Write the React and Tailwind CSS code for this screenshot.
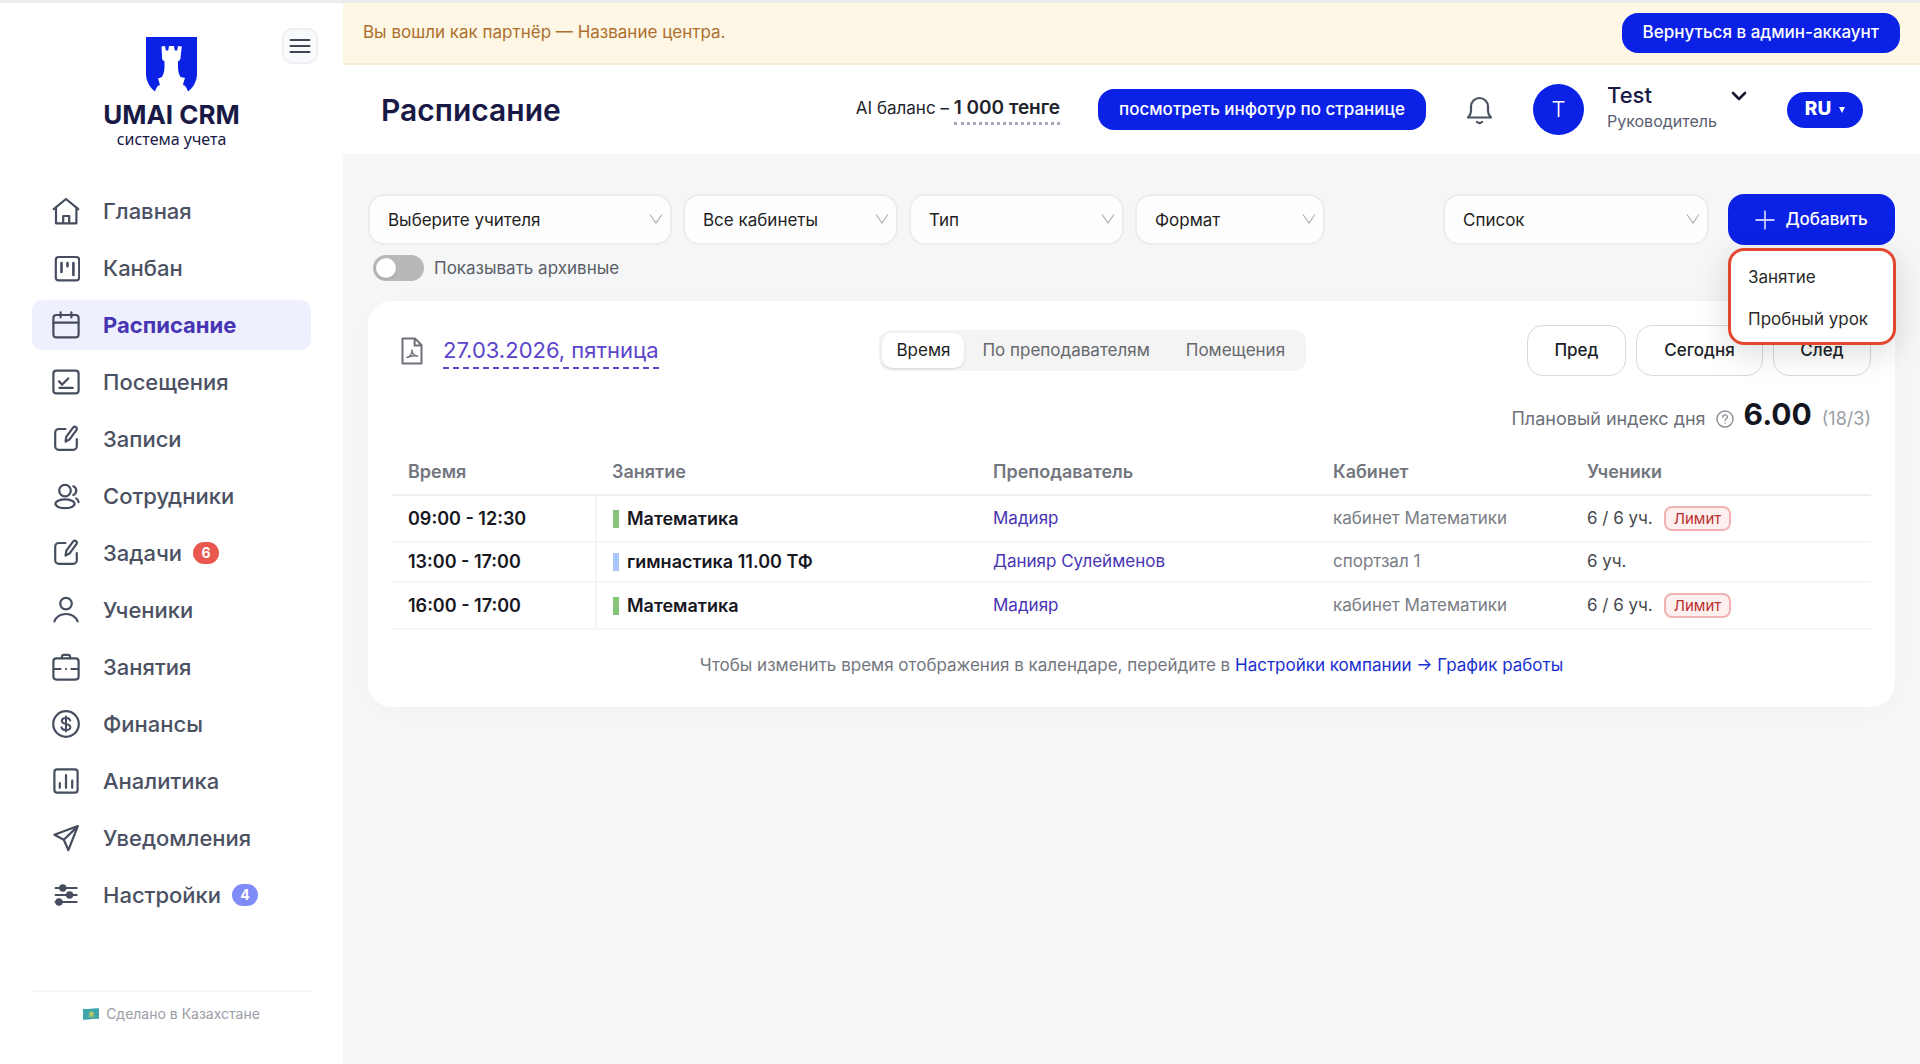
import { useState } from "react";

const NavIcon = ({ children }) => (
  <svg
    viewBox="0 0 28 28"
    fill="none"
    stroke="currentColor"
    strokeWidth="2.2"
    strokeLinecap="round"
    strokeLinejoin="round"
    aria-hidden="true"
    className="h-7 w-7 shrink-0 text-[#454d5e]"
  >
    {children}
  </svg>
);

const HomeIcon = () => (
  <NavIcon>
    <path d="M1.7 12.2 14 2l12.3 10.2M4 10.8V26.3h20.4V10.8" />
    <path d="M11.2 26v-7h6v7" />
  </NavIcon>
);

const KanbanIcon = () => (
  <NavIcon>
    <rect x="3.8" y="3" width="23.4" height="23.4" rx="3" />
    <path d="M9.5 9v9M15.5 9v3.2M21.4 9v12" strokeWidth="2.6" />
  </NavIcon>
);

const CalendarIcon = () => (
  <NavIcon>
    <rect x="1.4" y="4" width="25.2" height="22.4" rx="3" />
    <path d="M1.4 11.6h25.2M8.6 1.4v5M19.4 1.4v5" />
  </NavIcon>
);

const VisitsIcon = () => (
  <NavIcon>
    <rect x="1.4" y="2.6" width="25.2" height="22.8" rx="3" />
    <path d="m7 13.4 3.2 3.2 6-6.2M7.4 19.8h13.4" />
  </NavIcon>
);

const EditIcon = () => (
  <NavIcon>
    <path d="M13.400 4H6.800a3.600 3.600 0 0 0-3.600 3.600v13.600a3.600 3.600 0 0 0 3.600 3.600h14.400a3.600 3.600 0 0 0 3.600-3.600V14" />
    <path d="m13.600 16.600.6-4.800 7-9.400a2.100 2.100 0 0 1 3.400 2.400l-6.800 9.400z" />
  </NavIcon>
);

const StaffIcon = () => (
  <NavIcon>
    <circle cx="13" cy="8.600" r="5.800" />
    <ellipse cx="13" cy="21.800" rx="9.600" ry="4.400" />
    <path d="M21.400 4.200c1.800.8 2.800 2.400 2.800 4.400s-1 3.600-2.800 4.400M24.200 16.400c1.400.8 2.200 2 2.400 3.800" />
  </NavIcon>
);

const PupilIcon = () => (
  <NavIcon>
    <circle cx="14" cy="7.6" r="5.8" />
    <path d="M2.4 25.4C4.4 20.600 8.800 18 14 18s9.600 2.600 11.600 7.400" />
  </NavIcon>
);

const BriefcaseIcon = () => (
  <NavIcon>
    <rect x="1.400" y="5.400" width="25.200" height="21.200" rx="3" />
    <path d="M10 5.200V3.600a1.800 1.800 0 0 1 1.800-1.800h4.400A1.800 1.800 0 0 1 18 3.600v1.600M2 16h6.600M14 16h.1M19.400 16H26" />
  </NavIcon>
);

const FinanceIcon = () => (
  <NavIcon>
    <circle cx="14" cy="14" r="12.800" />
    <path
      d="M18.200 10.600c-.4-1.600-2-2.700-4.200-2.700-2.400 0-4.200 1.200-4.200 3 0 4.200 8.600 1.800 8.600 6.200 0 1.800-1.900 3-4.400 3-2.400 0-4.200-1.100-4.600-2.900M14 6.400v15.200"
      strokeWidth="2"
    />
  </NavIcon>
);

const AnalyticsIcon = () => (
  <NavIcon>
    <rect x="2.400" y="2.400" width="23.200" height="23.200" rx="2.600" />
    <path d="M7.800 16.200v4.600M14 8v12.800M20.200 13.600v7.200" />
  </NavIcon>
);

const SendIcon = () => (
  <NavIcon>
    <path d="M25.800 2 2.400 10.800l9.400 5 4.600 10.400zM25.400 2.600 11.800 15.800" />
  </NavIcon>
);

const SettingsIcon = () => (
  <NavIcon>
    <path d="M3.600 7h21M3.600 14h21M3.600 21h21" />
    <circle cx="10.800" cy="7" r="2.600" fill="currentColor" />
    <circle cx="17.600" cy="14" r="2.600" fill="currentColor" />
    <circle cx="7" cy="21" r="2.600" fill="currentColor" />
  </NavIcon>
);

const PdfIcon = () => (
  <svg viewBox="0 0 22 28" fill="none" stroke="currentColor" strokeWidth="2" strokeLinejoin="round" className="h-7 w-[22px]">
    <path d="M1.500 1.500h12.500l6.500 6.500v18.500h-19zM13.600 1.800V8.400h6.600" />
    <path d="M6 20.500c3.500-1 5-4.500 5-7.500 0 3 2 5.500 5.500 6-3.500-.6-7 0-10.500 1.500z" strokeWidth="1.400" />
  </svg>
);

const SelectArrow = () => (
  <svg viewBox="0 0 14 10" fill="none" stroke="currentColor" strokeWidth="1.300" aria-hidden="true" className="pointer-events-none absolute right-[9px] top-5 h-[10px] w-[14px] text-[#b0b3b8]">
    <path d="m1 .5 6 8.500 6-8.500" />
  </svg>
);

const Logo = () => (
  <div className="flex flex-col items-center text-[#191946]">
    <svg viewBox="0 0 51 55" aria-hidden="true" className="h-[55px] w-[51px]">
      <path d="M0 0h51v37c0 7-4 14-9.500 18h-32C4 51 0 44 0 37z" fill="#0b22e6" />
      <path
        d="m15.500 9.500 3.500-.5.800 4.500h2.400L23 9h5l.800 4.500h2.400L32 9l3.800.5-1.500 13-2.300 2v6c0 3.500 1 7 2.500 9.500l4.500 1-1.500 4.500-.5 2.500c2 .5 3.500 2 5 6.500v1h-33v-1c1.500-4.500 3-6 5-6.500l-.8-2.500-1.200-4 4-1.500c1.500-3 2.500-6 2.500-9.500v-6l-2.300-2z"
        fill="#fff"
      />
    </svg>
    <span className="mt-3 text-[26px] font-bold leading-[22px]">UMAI CRM</span>
    <span className="font-['Noto_Sans'] text-base leading-[26px]">система учета</span>
  </div>
);

const navItems = [
  { label: "Главная", Icon: HomeIcon },
  { label: "Канбан", Icon: KanbanIcon },
  { label: "Расписание", Icon: CalendarIcon, active: true },
  { label: "Посещения", Icon: VisitsIcon },
  { label: "Записи", Icon: EditIcon },
  { label: "Сотрудники", Icon: StaffIcon },
  { label: "Задачи", Icon: EditIcon, badge: "6", badgeClass: "bg-[#e9574f]" },
  { label: "Ученики", Icon: PupilIcon },
  { label: "Занятия", Icon: BriefcaseIcon },
  { label: "Финансы", Icon: FinanceIcon },
  { label: "Аналитика", Icon: AnalyticsIcon },
  { label: "Уведомления", Icon: SendIcon },
  { label: "Настройки", Icon: SettingsIcon, badge: "4", badgeClass: "bg-[#808bfa]" },
];

const lessons = [
  { id: 1, time: "09:00 - 12:30", name: "Математика", bar: "bg-[#86c47c]", teacher: "Мадияр", room: "кабинет Математики", pupils: "6 / 6 уч.", limit: true },
  { id: 2, time: "13:00 - 17:00", name: "гимнастика 11.00 ТФ", bar: "bg-[#a9c7fb]", teacher: "Данияр Сулейменов", room: "спортзал 1", pupils: "6 уч." },
  { id: 3, time: "16:00 - 17:00", name: "Математика", bar: "bg-[#86c47c]", teacher: "Мадияр", room: "кабинет Математики", pupils: "6 / 6 уч.", limit: true },
];

function FilterSelect({ label, className }) {
  return (
    <div className={`relative ${className}`}>
      <select
        aria-label={label}
        className="h-[51px] w-full appearance-none rounded-2xl border-2 border-[#ebecee] bg-[#fdfdfd] pl-[18px] pr-8 pt-[2px] text-[17px] text-[#1f1f1f]"
      >
        <option>{label}</option>
      </select>
      <SelectArrow />
    </div>
  );
}

function Sidebar() {
  return (
    <aside className="flex w-[343px] shrink-0 flex-col bg-white px-8 pb-10">
      <div className="relative flex justify-center pt-[34px]">
        <Logo />
        <button
          type="button"
          aria-label="Свернуть меню"
          className="absolute right-[-7px] top-[25px] flex h-9 w-9 items-center justify-center rounded-[10px] border-2 border-[#eeeff2] bg-[#f9fafb]"
        >
          <svg viewBox="0 0 22 16" stroke="#3f4756" strokeWidth="2" strokeLinecap="round" className="h-4 w-[22px] shrink-0">
            <path d="M1.500 2h19M1.500 8h19M1.500 14h19" />
          </svg>
        </button>
      </div>

      <nav className="mt-[34px] flex flex-col gap-[7px]">
        {navItems.map(({ label, Icon, active, badge, badgeClass }) => (
          <a
            key={label}
            href="#"
            className={`flex h-[50px] items-center rounded-[10px] pl-5 text-[22px] ${
              active ? "bg-[#eef0fe] font-bold text-[#4735b4]" : "font-medium text-[#4b5162]"
            }`}
          >
            <Icon />
            <span className="ml-[23px]">{label}</span>
            {badge && (
              <span className={`ml-[11px] flex h-[22px] w-[26px] items-center justify-center rounded-full text-sm font-bold text-white ${badgeClass}`}>
                {badge}
              </span>
            )}
          </a>
        ))}
      </nav>

      <div className="mt-auto flex items-center justify-center gap-[7px] border-t-2 border-[#f5f5f6] pt-3 text-sm leading-5 text-[#9a9da6]">
        <svg viewBox="0 0 16 12" aria-hidden="true" className="h-3 w-4">
          <path d="M0 .800C5 2 10-.6 16 .5v10.600C10 10 5 12.400 0 11.500z" fill="#3fa5ac" />
          <circle cx="8.500" cy="5.800" r="2.400" fill="#b9c964" />
          <path d="M5.500 8.200c2 1.400 4.200 1.300 6-.3" fill="none" stroke="#b9c964" strokeWidth=".8" />
        </svg>
        Сделано в Казахстане
      </div>
    </aside>
  );
}

function Header() {
  return (
    <header className="flex h-[89px] items-center bg-white pl-[38px] pr-[57px]">
      <h1 className="text-3xl font-semibold text-[#191946]">Расписание</h1>
      <div className="ml-auto flex items-center">
        <div className="text-[17px] text-[#22242c]">
          AI баланс –{" "}
          <a href="#" className="inline-block border-b-[3px] border-dotted border-[#a9abba] text-[19px] font-semibold leading-7">
            1 000 тенге
          </a>
        </div>
        <button type="button" className="ml-[38px] h-[41px] rounded-2xl bg-[#0b22e6] px-[21px] text-[17px] font-medium text-white">
          посмотреть инфотур по странице
        </button>
        <button type="button" aria-label="Уведомления" className="ml-10 text-[#4a5160]">
          <svg viewBox="0 0 27 30" fill="none" stroke="currentColor" strokeWidth="2.200" strokeLinecap="round" strokeLinejoin="round" className="h-[30px] w-[27px]">
            <path d="M2 22.500h23c-2-2-3-3.800-3-6.500v-4.500a8.500 8.500 0 0 0-17 0V16c0 2.700-1 4.500-3 6.500z" />
            <path d="M11 27c1.500 1.300 3.500 1.300 5 0" />
          </svg>
        </button>
        <span className="ml-10 flex h-[51px] w-[51px] items-center justify-center rounded-full bg-[#0b22e6] text-[22px] font-light text-white">T</span>
        <button type="button" className="mb-[6px] ml-[23px] flex w-[140px] items-start justify-between text-left">
          <span>
            <span className="block text-[22px] font-medium leading-7 text-[#191946]">Test</span>
            <span className="block text-base leading-6 text-[#5a6070]">Руководитель</span>
          </span>
          <svg viewBox="0 0 16 10" fill="none" stroke="#15152f" strokeWidth="2.600" strokeLinecap="round" strokeLinejoin="round" className="-ml-2 mt-[10px] h-[10px] w-4 shrink-0">
            <path d="m2 2 6 6 6-6" />
          </svg>
        </button>
        <button type="button" className="ml-10 flex h-9 w-[76px] items-center justify-center gap-2 rounded-full bg-[#0b22e6] text-[19px] font-extrabold text-white">
          RU
          <svg viewBox="0 0 6 6" fill="currentColor" className="h-[6px] w-[6px]">
            <path d="M0 0h6L3 6z" />
          </svg>
        </button>
      </div>
    </header>
  );
}

function Toolbar() {
  const [archived, setArchived] = useState(false);

  return (
    <div>
      <div className="flex items-center gap-[11px]">
        <FilterSelect label="Выберите учителя" className="w-[304px]" />
        <FilterSelect label="Все кабинеты" className="w-[215px]" />
        <FilterSelect label="Тип" className="w-[215px]" />
        <FilterSelect label="Формат" className="w-[190px]" />
        <FilterSelect label="Список" className="ml-auto w-[266px]" />
        <div className="relative ml-2">
          <button type="button" aria-expanded="true" className="flex h-[51px] w-[167px] items-center justify-center gap-[10px] rounded-2xl bg-[#0b22e6] text-[17px] font-medium text-white">
            <svg viewBox="0 0 20 20" stroke="#c3c9fa" strokeWidth="1.800" className="h-5 w-5">
              <path d="M10 .5v19M.5 10h19" />
            </svg>
            Добавить
          </button>
          <div role="menu" className="absolute -right-px top-[54px] z-10 w-[168px] rounded-2xl border-[3px] border-[#e2472f] bg-white pb-px pt-[6px] text-[17px] text-[#2a2a2a] shadow-[0_8px_32px_rgba(0,0,0,0.14)]">
            <button type="button" role="menuitem" className="block h-[42px] w-full pl-[17px] text-left">Занятие</button>
            <button type="button" role="menuitem" className="block h-[42px] w-full whitespace-nowrap pl-[17px] text-left">Пробный урок</button>
          </div>
        </div>
      </div>

      <label className="ml-[5px] mt-[10px] flex w-fit items-center gap-[10px] text-[17px] leading-[26px] text-[#5b5e66]">
        <input
          type="checkbox"
          role="switch"
          checked={archived}
          onChange={(e) => setArchived(e.target.checked)}
          className="h-[26px] w-[51px] appearance-none rounded-full bg-[#b7b8ba] before:ml-[3px] before:mt-[3px] before:block before:h-5 before:w-5 before:rounded-full before:bg-white before:shadow checked:bg-[#0b22e6] checked:before:ml-[28px]"
        />
        Показывать архивные
      </label>
    </div>
  );
}

function ScheduleTable() {
  return (
    <table className="mt-[17px] w-full table-fixed text-left text-[17px]">
      <colgroup>
        <col className="w-[204px]" />
        <col className="w-[381px]" />
        <col className="w-[340px]" />
        <col className="w-[254px]" />
        <col />
      </colgroup>
      <thead>
        <tr className="h-[45px] border-b-2 border-[#f0f1f3] text-lg text-[#73767e]">
          {["Время", "Занятие", "Преподаватель", "Кабинет", "Ученики"].map((title) => (
            <th key={title} className="px-4 font-semibold">{title}</th>
          ))}
        </tr>
      </thead>
      <tbody>
        {lessons.map((lesson) => (
          <tr key={lesson.id} className="border-b-2 border-[#f4f5f7]">
            <td className="border-r-2 border-[#f4f5f7] px-4 text-lg font-semibold text-[#17171f]">{lesson.time}</td>
            <td className="px-4 text-lg font-semibold text-[#17171f]">
              <span className="flex items-center gap-2">
                <span className={`h-[18px] w-[6px] ${lesson.bar}`} />
                {lesson.name}
              </span>
            </td>
            <td className="px-4">
              <a href="#" className="text-[#4735b4]">{lesson.teacher}</a>
            </td>
            <td className="px-4 text-[#797c84]">{lesson.room}</td>
            <td className="px-4 text-[#45484f]">
              <span className={`flex items-center gap-[11px] ${lesson.limit ? "h-[45px]" : "h-[38px]"}`}>
                {lesson.pupils}
                {lesson.limit && (
                  <span className="rounded-lg border-2 border-[#f0b3b1] bg-[#fdf0ef] px-2 text-[15px] leading-[21px] text-[#bb3030]">
                    Лимит
                  </span>
                )}
              </span>
            </td>
          </tr>
        ))}
      </tbody>
    </table>
  );
}

function ScheduleCard() {
  return (
    <section className="mt-5 rounded-3xl bg-white px-6 pb-[28px] pt-6 shadow-[0_4px_24px_rgba(0,0,0,0.02)]">
      <div className="flex items-center justify-between">
        <div className="flex items-center gap-5 pl-[9px]">
          <button type="button" aria-label="Скачать PDF" className="text-[#6e717a]">
            <PdfIcon />
          </button>
          <a href="#" className="border-b-2 border-dashed border-[#5b45cc] text-[22px] leading-[34px] text-[#5b45cc]">
            27.03.2026, пятница
          </a>
        </div>
        <div role="tablist" className="flex h-[41px] items-center rounded-xl bg-[#f4f4f4] p-[3px] text-[17px] text-[#66686c]">
          <button type="button" role="tab" aria-selected="true" className="h-[35px] rounded-[10px] bg-white px-[14px] text-[#1f1f1f] shadow-sm">Время</button>
          <button type="button" role="tab" aria-selected="false" className="h-[35px] px-[18px]">По преподавателям</button>
          <button type="button" role="tab" aria-selected="false" className="h-[35px] px-[18px]">Помещения</button>
        </div>
        <div className="flex justify-end gap-[10px] text-[17px] font-medium text-[#202228]">
          <button type="button" className="h-[51px] w-[99px] rounded-2xl border border-[#d8d9dc]">Пред</button>
          <button type="button" className="h-[51px] w-[127px] rounded-2xl border border-[#d8d9dc]">Сегодня</button>
          <button type="button" className="h-[51px] w-[98px] rounded-2xl border border-[#d8d9dc]">След</button>
        </div>
      </div>

      <div className="mt-5 flex items-baseline justify-end text-lg text-[#6d7079]">
        Плановый индекс дня
        <svg viewBox="0 0 18 18" fill="none" stroke="#8d9098" strokeWidth="1.400" strokeLinecap="round" className="ml-[10px] mt-[9px] h-[18px] w-[18px] self-center">
          <circle cx="9" cy="9" r="8" />
          <path d="M6.800 7.200c0-3 4.600-3 4.600-.2 0 1.700-2.300 1.700-2.300 3.400M9.100 13v.1" />
        </svg>
        <strong className="ml-[10px] text-3xl font-bold leading-9 text-[#14161f]">6.00</strong>
        <span className="ml-[10px] text-[#9b9ea5]">(18/3)</span>
      </div>

      <ScheduleTable />

      <p className="mt-[21px] text-center text-[17px] leading-7 text-[#73767e]">
        Чтобы изменить время отображения в календаре, перейдите в{" "}
        <a href="#" className="text-[#1a2fd0]">Настройки компании → График работы</a>
      </p>
    </section>
  );
}

export default function App() {
  return (
    <div className="flex min-h-screen border-t-[3px] border-[#ededee] bg-[#f5f6f8] font-['Inter',sans-serif]">
      <Sidebar />
      <div className="min-w-0 flex-1">
        <div className="flex h-[62px] items-center justify-between border-b-2 border-[#f7ebd2] bg-[#fef7e6] px-5 text-[17px]">
          <span className="text-[#ad6f2d]">Вы вошли как партнёр — Название центра.</span>
          <button type="button" className="h-10 rounded-2xl bg-[#0b22e6] px-[21px] font-medium text-white">
            Вернуться в админ-аккаунт
          </button>
        </div>
        <Header />
        <main className="px-[25px] py-10">
          <Toolbar />
          <ScheduleCard />
        </main>
      </div>
    </div>
  );
}
